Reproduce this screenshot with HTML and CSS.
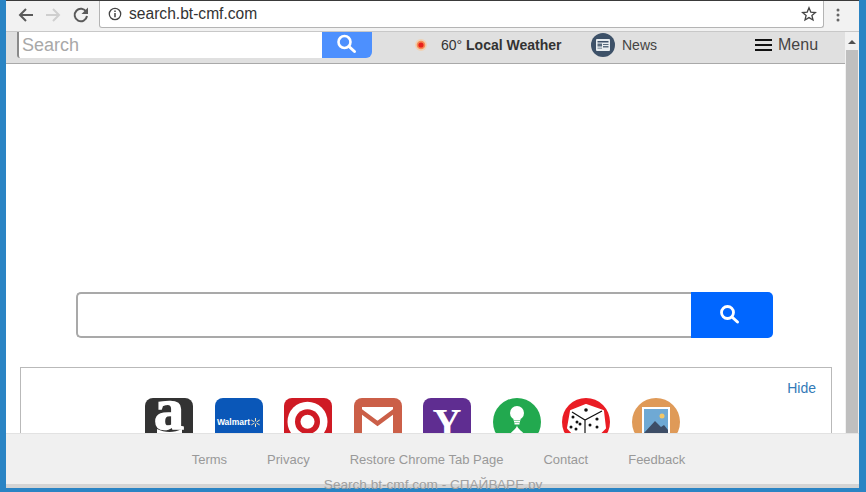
FILE: index.html
```html
<!DOCTYPE html>
<html lang="en">
<head>
  <meta charset="UTF-8">
  <meta name="viewport" content="width=device-width, initial-scale=1.0">
  <title>Search.bt-cmf.com</title>
  <link rel="stylesheet" href="styles.css">
</head>
<body>
  <div class="window">
    <!-- Barra del navegador -->
    <div class="toolbar">
      <svg class="nav-icon" width="18" height="18" viewBox="0 0 18 18"><path d="M16 9H3.500M9 3L3 9l6 6" fill="none" stroke="#5a5a5a" stroke-width="2"/></svg>
      <svg class="nav-icon" width="18" height="18" viewBox="0 0 18 18"><path d="M2 9h12.500M9 3l6 6-6 6" fill="none" stroke="#cfcfcf" stroke-width="2"/></svg>
      <svg class="nav-icon" width="18" height="18" viewBox="0 0 18 18"><path d="M14.300 6A6.200 6.200 0 1 0 15 10" fill="none" stroke="#5a5a5a" stroke-width="2"/><path d="M16 1.500V8H9.500z" fill="#5a5a5a"/></svg>
      <div class="omnibox">
        <svg width="14" height="14" viewBox="0 0 14 14"><circle cx="7" cy="7" r="5.700" fill="none" stroke="#444" stroke-width="1.300"/><path d="M7 6v4.200M7 3.500v1.400" stroke="#444" stroke-width="1.500"/></svg>
        <span class="url">search.bt-cmf.com</span>
        <svg class="star" width="16" height="16" viewBox="0 0 16 16"><path d="M8 1.800l1.800 4.300 4.600.4-3.500 3 1.100 4.500L8 11.600l-4 2.400 1.100-4.500-3.500-3 4.600-.4z" fill="none" stroke="#444" stroke-width="1.300"/></svg>
      </div>
      <svg class="dots" width="4" height="14" viewBox="0 0 4 14"><circle cx="2" cy="2" r="1.500" fill="#666"/><circle cx="2" cy="7" r="1.500" fill="#666"/><circle cx="2" cy="12" r="1.500" fill="#666"/></svg>
    </div>

    <div class="viewport">
      <div class="page">
        <!-- Barra superior del sitio -->
        <div class="topbar">
          <form class="top-search">
            <input class="top-input" type="text" placeholder="Search">
            <button class="top-btn" type="button">
              <svg width="22" height="22" viewBox="0 0 22 22"><circle cx="9.500" cy="9" r="6" fill="none" stroke="#fff" stroke-width="2.600"/><path d="M14 13.500l5.500 5" stroke="#fff" stroke-width="3" stroke-linecap="round"/></svg>
            </button>
          </form>
          <div class="weather">
            <svg width="14" height="14" viewBox="0 0 14 14"><circle cx="7" cy="7" r="6" fill="#f0d2b4"/><circle cx="7" cy="7" r="4.300" fill="#f78a55"/><circle cx="7" cy="7" r="2.600" fill="#e8201c"/></svg>
            <span class="temp">60° <b>Local Weather</b></span>
          </div>
          <div class="news">
            <svg width="24" height="24" viewBox="0 0 24 24"><circle cx="12" cy="12" r="12" fill="#3d5168"/><rect x="5" y="6" width="14" height="12" rx="1" fill="#e8edf0"/><rect x="6.500" y="8" width="11" height="1.500" fill="#3d5168"/><rect x="6.500" y="10.500" width="4.500" height="3" fill="#5a6c7e"/><rect x="12" y="11" width="5.500" height="1" fill="#5a6c7e"/><rect x="12" y="13" width="5.500" height="1.500" fill="#5a6c7e"/><rect x="6.500" y="14.500" width="4.500" height="1.500" fill="#98a5b0"/></svg>
            <span>News</span>
          </div>
          <div class="menu">
            <span class="burger"><i></i><i></i><i></i></span>
            <span>Menu</span>
          </div>
        </div>

        <!-- Buscador central -->
        <form class="main-search">
          <input class="main-input" type="text">
          <button class="main-btn" type="button">
            <svg width="22" height="22" viewBox="0 0 22 22"><circle cx="9.500" cy="9.500" r="6" fill="none" stroke="#fff" stroke-width="2.800"/><path d="M14 14l5.500 5" stroke="#fff" stroke-width="3" stroke-linecap="round"/></svg>
          </button>
        </form>

        <!-- Accesos directos -->
        <div class="shortcuts">
          <a href="#" class="hide">Hide</a>
          <div class="icons">
            <div class="tile tile-amazon">
              <span>a</span>
              <svg class="swoosh" width="48" height="48" viewBox="0 0 48 48"><path d="M12 31c8 4 17 4 25 0v5H12z" fill="#fff"/></svg>
            </div>
            <div class="tile tile-walmart">
              <span>Walmart</span>
              <svg width="9" height="9" viewBox="0 0 10 10"><path d="M5 0v3.200M5 6.800V10M.7 2.500l2.700 1.600M6.600 5.900l2.700 1.600M.7 7.500l2.700-1.600M6.600 4.100l2.700-1.600" stroke="#f3e6bd" stroke-width="1.100" stroke-linecap="round"/></svg>
            </div>
            <div class="tile tile-target">
              <svg width="48" height="48" viewBox="0 0 48 48"><circle cx="23.500" cy="23.700" r="20" fill="#fff"/><circle cx="23.500" cy="23.700" r="12.500" fill="#cf1a24"/><circle cx="23.500" cy="23.700" r="7" fill="#fff"/></svg>
            </div>
            <div class="tile tile-mail">
              <svg width="48" height="48" viewBox="0 0 48 48"><rect x="8" y="9" width="31" height="31" fill="#fff"/><path d="M6 12.500l17.500 13 17.500-13" fill="none" stroke="#cb5f48" stroke-width="4.500"/></svg>
            </div>
            <div class="tile tile-yahoo"><span>Y</span></div>
            <div class="tile tile-round tile-bulb">
              <svg width="48" height="48" viewBox="0 0 48 48"><circle cx="24" cy="15" r="7" fill="#fff"/><rect x="20.500" y="21" width="7" height="1.500" fill="#fff"/><rect x="21" y="23" width="6" height="1.500" fill="#fff"/><rect x="21.500" y="25" width="5" height="1.500" fill="#fff"/><path d="M24 27c0 4-6 6-10 13h20c-4-7-10-9-10-13z" fill="#fff"/></svg>
            </div>
            <div class="tile tile-round tile-dice">
              <svg width="48" height="48" viewBox="0 0 48 48"><path d="M9 13L24 7l17 6 2 17-13 13H18L6 30z" fill="#fff" stroke="#fff" stroke-width="2" stroke-linejoin="round"/><path d="M10 14l13 8 17-9M23 22v14" fill="none" stroke="#111" stroke-width="1.200"/><circle cx="24" cy="12" r="1.800" fill="#111"/><circle cx="11" cy="19" r="1.500" fill="#111"/><circle cx="15" cy="24" r="1.500" fill="#111"/><circle cx="9" cy="29" r="1.500" fill="#111"/><circle cx="18" cy="26" r="1.500" fill="#111"/><circle cx="14" cy="31" r="1.500" fill="#111"/><circle cx="35" cy="21" r="1.600" fill="#111"/><circle cx="28" cy="27" r="1.500" fill="#111"/><circle cx="35" cy="29" r="1.500" fill="#111"/></svg>
            </div>
            <div class="tile tile-round tile-photo">
              <svg width="48" height="48" viewBox="0 0 48 48"><rect x="10" y="9" width="28" height="31" fill="#fff"/><rect x="12" y="11" width="24" height="24" fill="#6fa9d4"/><circle cx="30" cy="18" r="2.500" fill="#f3c766"/><path d="M12 35l11-12 6 6 3-2 4 5v3z" fill="#3d4d66"/></svg>
            </div>
          </div>
        </div>
      </div>

      <div class="scrollbar">
        <span class="scroll-up"></span>
        <span class="scroll-thumb"></span>
      </div>

      <!-- Pie fijo sobre el contenido -->
      <div class="footer">
        <a href="#">Terms</a>
        <a href="#">Privacy</a>
        <a href="#">Restore Chrome Tab Page</a>
        <a href="#">Contact</a>
        <a href="#">Feedback</a>
      </div>
    </div>
  </div>
  <div class="watermark">Search.bt-cmf.com - СПАЙВАРЕ.ру</div>
  <div class="frame-bottom"></div>
</body>
</html>
```

FILE: styles.css
```css
html, body {
  margin: 0;
  height: 100%;
}

body {
  font-family: 'Liberation Sans', Arial, sans-serif;
  background: #2a84c4;
  overflow: hidden;
  position: relative;
  color: #333;
}

.window {
  height: 488px;
  margin: 0 7px 0 6px;
  background: #f2f2f2;
  display: flex;
  flex-direction: column;
  border-top: 1px solid #3a3a3a;
  box-sizing: border-box;
}

/* Barra del navegador */
.toolbar {
  height: 30px;
  flex: none;
  display: flex;
  align-items: flex-start;
  padding-left: 10px;
  box-sizing: border-box;
}

.nav-icon {
  margin: 5px 8px 0 1px;
}

.nav-icon:nth-child(2),
.nav-icon:nth-child(3) {
  margin-right: 9px;
}

.omnibox {
  width: 725px;
  height: 27px;
  flex: none;
  background: #fff;
  border: 1px solid #b4b4b4;
  border-top: none;
  border-radius: 0 0 3px 3px;
  box-sizing: border-box;
  display: flex;
  align-items: center;
  padding: 0 6px 0 8px;
  gap: 7px;
}

.url {
  font-size: 15.600px;
  color: #333;
  flex: 1;
}

.dots {
  margin: 7px 0 0 12px;
}

.viewport {
  flex: 1;
  display: flex;
  position: relative;
  overflow: hidden;
  border-top: 1px solid #c8c8c8;
}

.page {
  flex: 1;
  background: #fff;
  min-width: 0;
}

/* Barra superior del sitio */
.topbar {
  height: 25px;
  padding-bottom: 6px;
  background: #e0e0e0;
  border-bottom: 1px solid #a9a9a9;
  display: flex;
  align-items: center;
  font-size: 14px;
}

.top-search {
  display: flex;
  margin: 0 0 0 11px;
  height: 26px;
  align-self: flex-start;
}

.top-input {
  width: 305px;
  height: 26px;
  box-sizing: border-box;
  border: none;
  border-left: 2px solid #8a8a8a;
  border-radius: 0 0 0 3px;
  background: #fff;
  padding: 0 3px;
  font-family: inherit;
  font-size: 18px;
}

.top-input::placeholder {
  color: #a8a8a8;
}

.top-btn {
  width: 50px;
  height: 26px;
  background: #4d90fe;
  border: none;
  border-radius: 0 0 6px 0;
  padding: 0 2px 2px 0;
  display: flex;
  align-items: center;
  justify-content: center;
}

.weather {
  display: flex;
  align-items: center;
  margin-left: 42px;
  gap: 13px;
  width: 155px;
  white-space: nowrap;
}

.temp b {
  color: #333;
}

.news {
  display: flex;
  align-items: center;
  gap: 7px;
  margin-left: 22px;
  color: #444;
}

.menu {
  display: flex;
  align-items: center;
  gap: 6px;
  margin-left: 98px;
  font-size: 16px;
  color: #444;
}

.burger {
  display: flex;
  flex-direction: column;
  gap: 3px;
  width: 17px;
}

.burger i {
  height: 2px;
  background: #111;
}

/* Buscador central */
.main-search {
  display: flex;
  margin: 228px 0 0 70px;
  width: 697px;
  height: 46px;
}

.main-input {
  flex: 1;
  min-width: 0;
  box-sizing: border-box;
  border: 2px solid #a9a9a9;
  border-right: none;
  border-radius: 5px 0 0 5px;
  background: #fff;
}

.main-btn {
  width: 82px;
  background: #0066ff;
  border: none;
  border-radius: 0 5px 5px 0;
  padding: 0 6px 2px 0;
  display: flex;
  align-items: center;
  justify-content: center;
}

/* Accesos directos */
.shortcuts {
  margin: 29px 0 0 14px;
  width: 812px;
  height: 120px;
  box-sizing: border-box;
  border: 1px solid #b9b9b9;
  padding: 12px 15px 0 124px;
}

.hide {
  display: block;
  text-align: right;
  font-size: 14px;
  line-height: 16px;
  color: #337ab7;
  text-decoration: none;
}

.icons {
  display: flex;
  gap: 21.500px;
  margin-top: 2px;
}

.tile {
  width: 48px;
  height: 48px;
  flex: none;
  border-radius: 8px;
  overflow: hidden;
  display: flex;
  align-items: center;
  justify-content: center;
  position: relative;
}

.tile-round {
  border-radius: 50%;
}

.tile-amazon {
  background: #333;
  color: #fff;
  font-family: 'Liberation Serif', serif;
  font-weight: bold;
  font-size: 60px;
  line-height: 22px;
  align-items: flex-start;
  overflow: visible;
  -webkit-text-stroke: 1.500px #fff;
}

.swoosh {
  position: absolute;
  left: 0;
  top: 0;
}

.tile-walmart {
  background: #0a57b8;
  color: #fff;
  font-size: 8.500px;
  font-weight: bold;
  gap: 1px;
}

.tile-target {
  background: #cf1a24;
}

.tile-mail {
  background: #cb5f48;
}

.tile-yahoo {
  background: #5f2d91;
  color: #fff;
  font-family: 'Liberation Serif', serif;
  font-weight: bold;
  font-size: 40px;
}

.tile-bulb {
  background: #22a94f;
}

.tile-dice {
  background: #ea1c24;
}

.tile-photo {
  background: #df9a58;
}

.scrollbar {
  width: 14px;
  flex: none;
  background: #f1f1f1;
  display: flex;
  flex-direction: column;
  align-items: center;
}

.scroll-up {
  margin: 8px 0 6px;
  border-left: 4px solid transparent;
  border-right: 4px solid transparent;
  border-bottom: 4px solid #505050;
}

.scroll-thumb {
  width: 12px;
  flex: 1;
  background: #bfbfbf;
}

/* Pie fijo sobre el contenido */
.footer {
  position: absolute;
  left: 0;
  right: 0;
  bottom: 0;
  height: 55px;
  box-sizing: border-box;
  background: #f0f0f0;
  border-top: 1px solid #e2e2e2;
  border-bottom: 4px solid #d4d4d4;
  display: flex;
  justify-content: center;
  gap: 40px;
  padding: 18px 0 0 12px;
  font-size: 13px;
}

.footer a {
  color: #999;
  text-decoration: none;
}

.watermark {
  position: absolute;
  left: 0;
  right: 0;
  top: 477px;
  line-height: 15px;
  text-align: center;
  font-size: 13.600px;
  color: #a0a0a0;
}

/* El marco azul tapa la parte baja del texto */
.frame-bottom {
  position: absolute;
  left: 0;
  right: 0;
  bottom: 0;
  height: 3px;
  background: #2a84c4;
}
```
